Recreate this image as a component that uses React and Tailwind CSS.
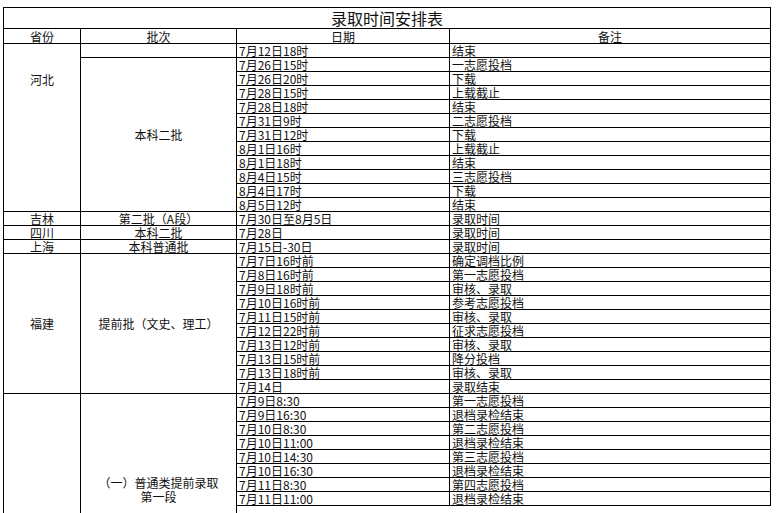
const hebei = [
  ['7月26日15时', '一志愿投档'],
  ['7月26日20时', '下载'],
  ['7月28日15时', '上载截止'],
  ['7月28日18时', '结束'],
  ['7月31日9时', '二志愿投档'],
  ['7月31日12时', '下载'],
  ['8月1日16时', '上载截止'],
  ['8月1日18时', '结束'],
  ['8月4日15时', '三志愿投档'],
  ['8月4日17时', '下载'],
  ['8月5日12时', '结束'],
]

const fujian = [
  ['7月7日16时前', '确定调档比例'],
  ['7月8日16时前', '第一志愿投档'],
  ['7月9日18时前', '审核、录取'],
  ['7月10日16时前', '参考志愿投档'],
  ['7月11日15时前', '审核、录取'],
  ['7月12日22时前', '征求志愿投档'],
  ['7月13日12时前', '审核、录取'],
  ['7月13日15时前', '降分投档'],
  ['7月13日18时前', '审核、录取'],
  ['7月14日', '录取结束'],
]

const early = [
  ['7月9日8:30', '第一志愿投档'],
  ['7月9日16:30', '退档录检结束'],
  ['7月10日8:30', '第二志愿投档'],
  ['7月10日11:00', '退档录检结束'],
  ['7月10日14:30', '第三志愿投档'],
  ['7月10日16:30', '退档录检结束'],
  ['7月11日8:30', '第四志愿投档'],
  ['7月11日11:00', '退档录检结束'],
]

const cell = 'border border-black p-0 leading-none'
const rowH = 'h-[14px]'

function DateCells({ date, note }) {
  return (
    <>
      <td className={`${cell} pl-[2px] text-left align-bottom`}>{date}</td>
      <td className={`${cell} pl-[2px] text-left align-bottom`}>{note}</td>
    </>
  )
}

export default function App() {
  return (
    <div className="h-[513px] overflow-hidden bg-white pl-[3px] pt-[7px] font-['Noto_Sans_CJK_SC',sans-serif] text-[12px] text-[#111]">
      <table className="w-[767px] table-fixed border-collapse">
        <colgroup>
          <col className="w-[77px]" />
          <col className="w-[156px]" />
          <col className="w-[213px]" />
          <col className="w-[321px]" />
        </colgroup>
        <tbody>
          <tr className="h-[21px]">
            <td colSpan={4} className={`${cell} text-center align-middle text-[16px]`}>
              录取时间安排表
            </td>
          </tr>
          <tr className="h-[15px]">
            <td className={`${cell} text-center align-bottom`}>省份</td>
            <td className={`${cell} text-center align-bottom`}>批次</td>
            <td className={`${cell} text-center align-bottom`}>日期</td>
            <td className={`${cell} text-center align-bottom`}>备注</td>
          </tr>

          {/* 河北 */}
          <tr className={rowH}>
            <td rowSpan={12} className={`${cell} pt-[30px] text-center align-top`}>河北</td>
            <td className={cell}></td>
            <DateCells date="7月12日18时" note="结束" />
          </tr>
          {hebei.map(([d, n], i) => (
            <tr key={d} className={rowH}>
              {i === 0 && (
                <td rowSpan={11} className={`${cell} text-center align-middle`}>本科二批</td>
              )}
              <DateCells date={d} note={n} />
            </tr>
          ))}

          <tr className={rowH}>
            <td className={`${cell} text-center align-bottom`}>吉林</td>
            <td className={`${cell} text-center align-bottom`}>第二批（A段）</td>
            <DateCells date="7月30日至8月5日" note="录取时间" />
          </tr>
          <tr className={rowH}>
            <td className={`${cell} text-center align-bottom`}>四川</td>
            <td className={`${cell} text-center align-bottom`}>本科二批</td>
            <DateCells date="7月28日" note="录取时间" />
          </tr>
          <tr className={rowH}>
            <td className={`${cell} text-center align-bottom`}>上海</td>
            <td className={`${cell} text-center align-bottom`}>本科普通批</td>
            <DateCells date="7月15日-30日" note="录取时间" />
          </tr>

          {/* 福建 */}
          {fujian.map(([d, n], i) => (
            <tr key={'f' + i} className={rowH}>
              {i === 0 && (
                <>
                  <td rowSpan={10} className={`${cell} text-center align-middle`}>福建</td>
                  <td rowSpan={10} className={`${cell} text-center align-middle`}>提前批（文史、理工）</td>
                </>
              )}
              <DateCells date={d} note={n} />
            </tr>
          ))}

          {/* 普通类提前录取 */}
          {early.map(([d, n], i) => (
            <tr key={'e' + i} className={rowH}>
              {i === 0 && (
                <>
                  <td rowSpan={9} className={`${cell} border-b-0`}></td>
                  <td rowSpan={9} className={`${cell} border-b-0 pb-[14px] text-center align-bottom`}>
                    <div className="leading-[14px]">（一）普通类提前录取</div>
                    <div className="leading-[14px]">第一段</div>
                  </td>
                </>
              )}
              <DateCells date={d} note={n} />
            </tr>
          ))}
          <tr className="h-[12px]">
            <td className="border-0 p-0"></td>
            <td className="border-0 p-0"></td>
          </tr>
        </tbody>
      </table>
    </div>
  )
}
